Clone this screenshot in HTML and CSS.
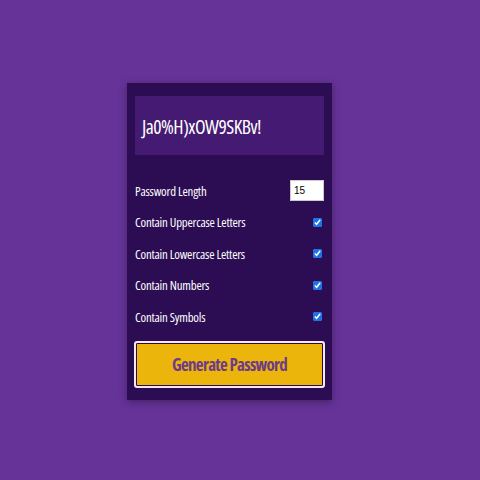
FILE: index.html
```html
<!DOCTYPE html>
<html>
<head>
<meta charset="utf-8">
<link rel="stylesheet" href="styles.css">
</head>
<body>
<main class="page">
  <section class="card">
    <div class="result">Ja0%H)xOW9SKBv!</div>
    <div class="settings">
      <div class="row"><label>Password Length</label><input class="len" type="number" value="15"></div>
      <div class="row"><label>Contain Uppercase Letters</label><input class="chk" type="checkbox" checked></div>
      <div class="row"><label>Contain Lowercase Letters</label><input class="chk" type="checkbox" checked></div>
      <div class="row"><label>Contain Numbers</label><input class="chk" type="checkbox" checked></div>
      <div class="row"><label>Contain Symbols</label><input class="chk" type="checkbox" checked></div>
    </div>
    <button class="gen">Generate Password</button>
  </section>
</main>
</body>
</html>
```
FILE: styles.css
```css
html, body {
  margin: 0;
  padding: 0;
}
body {
  background: #663399;
  font-family: "Open Sans", "DejaVu Sans", sans-serif;
  font-stretch: condensed;
}
.page {
  width: 480px;
  height: 480px;
  display: flex;
  justify-content: center;
  align-items: flex-start;
  padding-top: 83px;
  box-sizing: border-box;
}
.card {
  width: 205px;
  margin-left: -21px;
  background: #2c0d54;
  box-shadow: 0 2px 8px rgba(0, 0, 0, 0.35);
  padding: 13px 8px 12px;
  box-sizing: border-box;
  display: flex;
  flex-direction: column;
}
.result {
  height: 59px;
  background: #451a72;
  color: #fff;
  font-size: 19.5px;
  display: flex;
  align-items: center;
  padding: 2px 0 0 7px;
  box-sizing: border-box;
  letter-spacing: -0.5px;
}
.settings {
  display: flex;
  flex-direction: column;
  margin-top: 25px;
  gap: 10px;
}
.row {
  display: flex;
  align-items: center;
  justify-content: space-between;
  height: 21.5px;
  color: #fff;
  font-size: 12.8px;
  letter-spacing: -0.2px;
}
.len {
  width: 34px;
  height: 21px;
  box-sizing: border-box;
  border: 1px solid #ccc;
  padding: 0 3px;
  font-family: "Liberation Sans", sans-serif;
  font-size: 10px;
  margin: 0;
}
.len::-webkit-inner-spin-button { -webkit-appearance: none; }
.chk {
  width: 9px;
  height: 9px;
  margin: 0 2px 0 0;
  accent-color: #1a73e8;
}
.gen {
  margin-top: 13px;
  margin-left: -1px;
  margin-right: -1px;
  height: 47px;
  background: #ecb50b;
  border: 2px solid #f4eaf0;
  box-shadow: inset 0 0 0 1px #2a0a4a;
  border-radius: 3px;
  color: #6d3b8a;
  font-family: "Open Sans", "DejaVu Sans", sans-serif;
  font-stretch: condensed;
  font-weight: bold;
  font-size: 17px;
  letter-spacing: -0.7px;
}
```
